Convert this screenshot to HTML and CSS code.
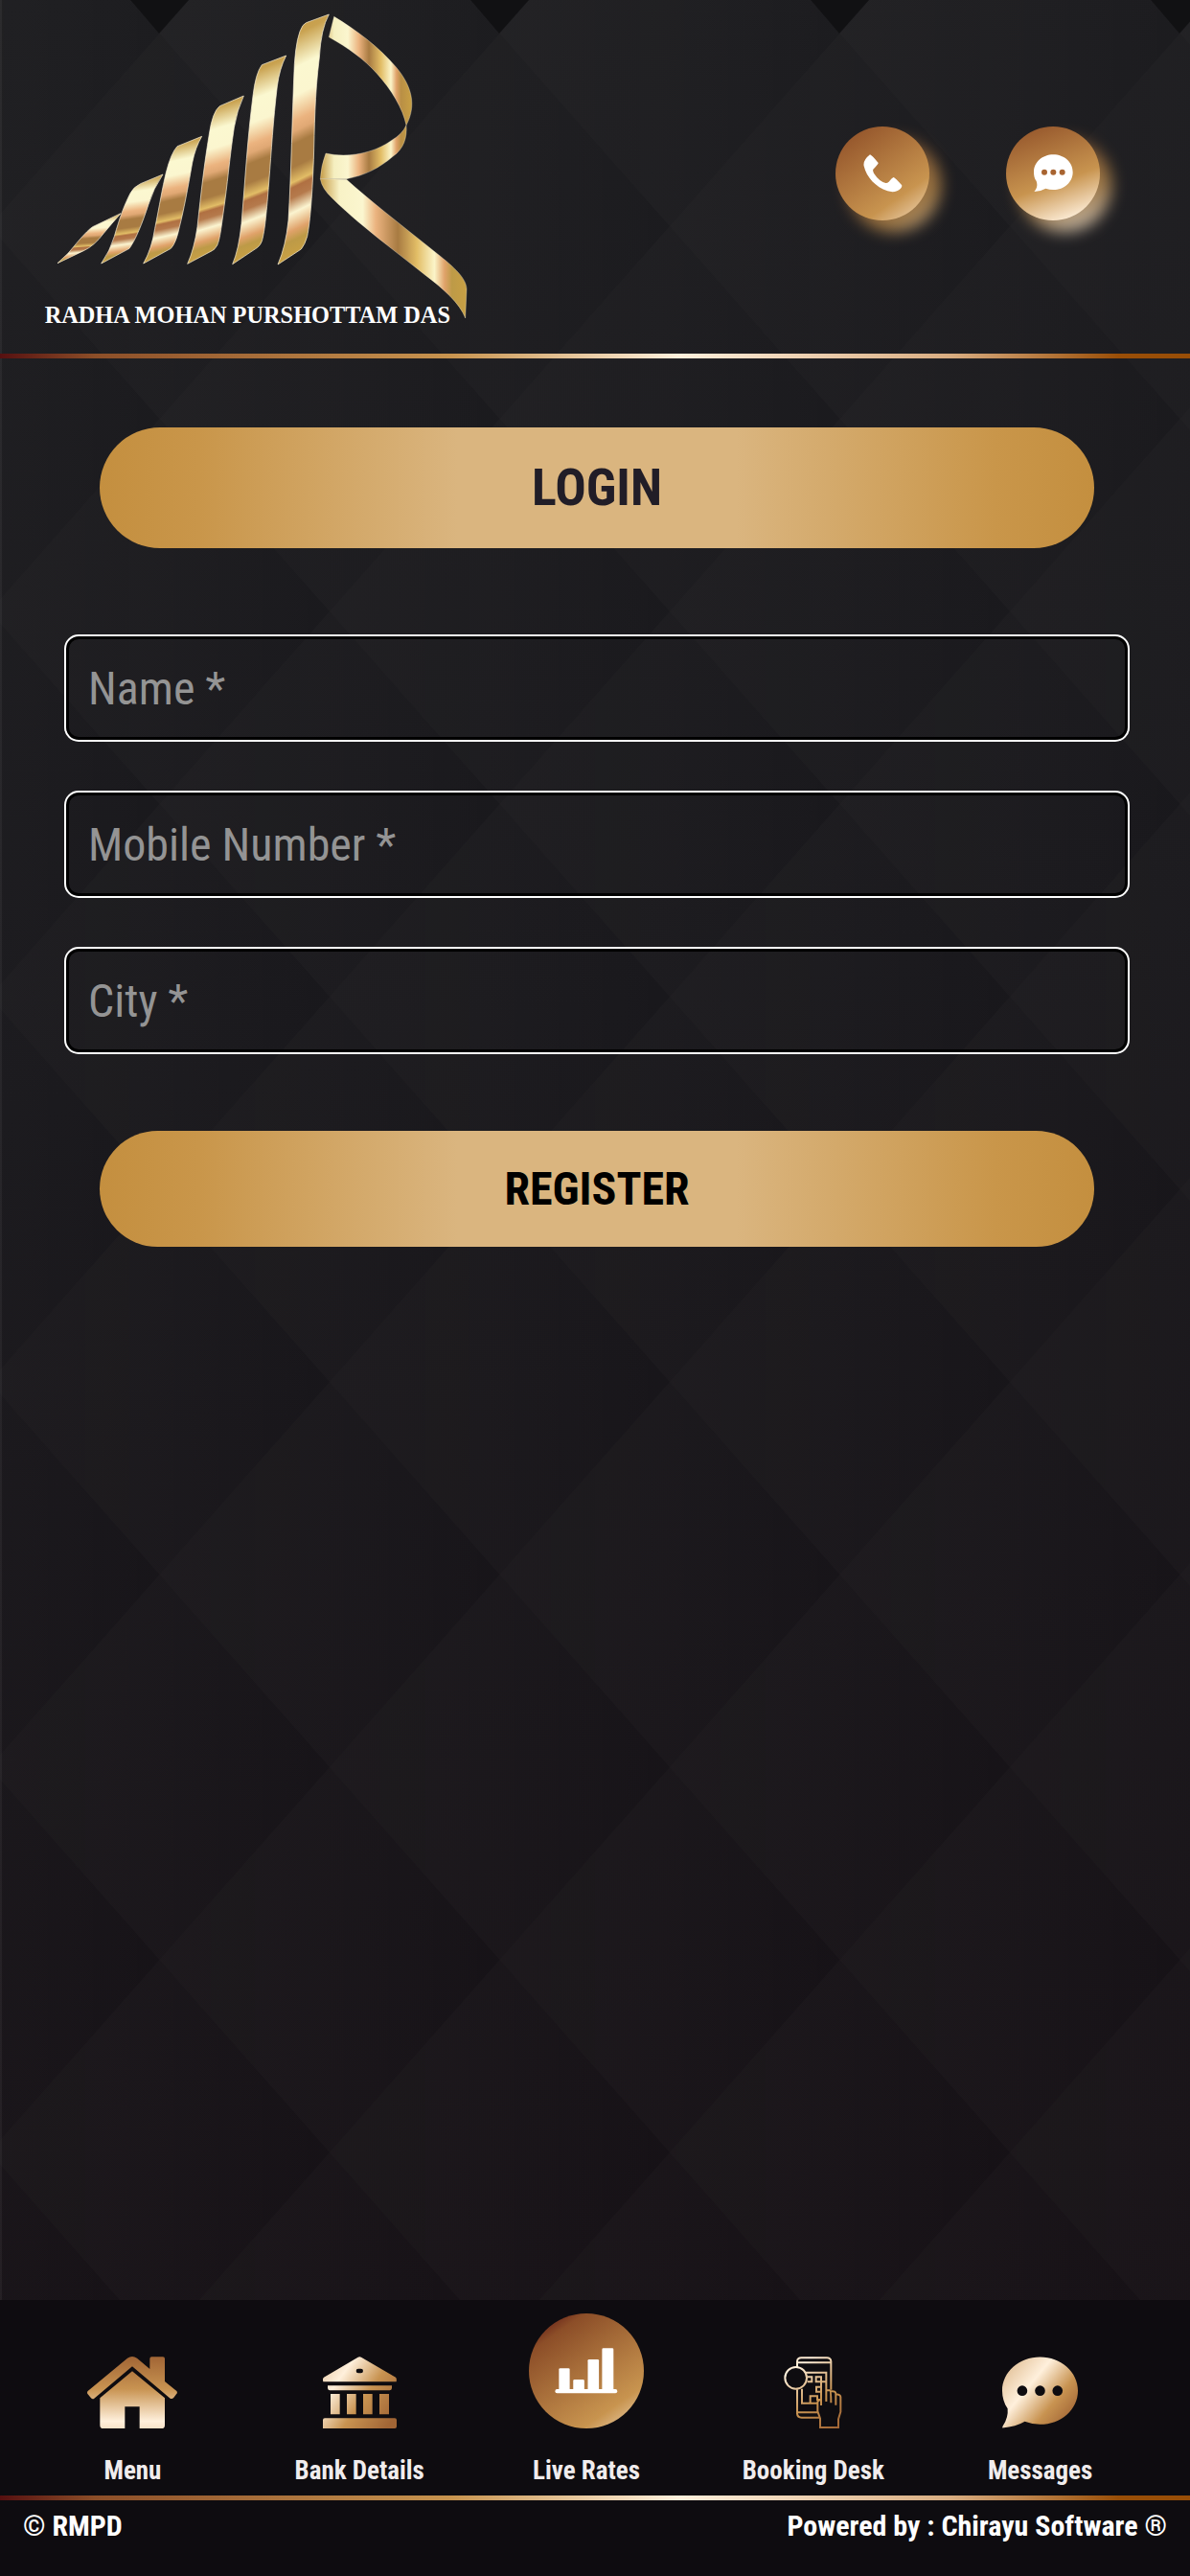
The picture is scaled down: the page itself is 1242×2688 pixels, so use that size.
FILE: index.html
```
<!DOCTYPE html>
<html lang="en">
<head>
    <meta charset="UTF-8">
    <meta name="viewport" content="width=device-width, initial-scale=1.0">
    <title>Radha Mohan Purshottam Das</title>
    <link rel="stylesheet" href="styles.css">
</head>
<body>
    <header class="header">
        <svg class="logo" viewBox="0 0 1560 1083" role="img" aria-label="Radha Mohan Purshottam Das">
            <defs>
                <linearGradient id="bar" x1="0.45" y1="0" x2="0.55" y2="1">
                    <stop offset="0" stop-color="#c49a45"/>
                    <stop offset="0.07" stop-color="#c9a250"/>
                    <stop offset="0.2" stop-color="#fbf8d0"/>
                    <stop offset="0.31" stop-color="#fbf6cf"/>
                    <stop offset="0.41" stop-color="#ebb37f"/>
                    <stop offset="0.45" stop-color="#e0a874"/>
                    <stop offset="0.5" stop-color="#a87b42"/>
                    <stop offset="0.59" stop-color="#a87b42"/>
                    <stop offset="0.65" stop-color="#e2bd66"/>
                    <stop offset="0.67" stop-color="#b07042"/>
                    <stop offset="0.71" stop-color="#b57a4c"/>
                    <stop offset="0.77" stop-color="#fbf4d0"/>
                    <stop offset="0.84" stop-color="#e0a26a"/>
                    <stop offset="0.88" stop-color="#bd9a47"/>
                    <stop offset="0.94" stop-color="#c8a044"/>
                    <stop offset="1" stop-color="#98683a"/>
                </linearGradient>
                <linearGradient id="loop" gradientUnits="userSpaceOnUse" x1="1003" y1="0" x2="1290" y2="0">
                    <stop offset="0" stop-color="#c49a45"/>
                    <stop offset="0.15" stop-color="#f5efc0"/>
                    <stop offset="0.3" stop-color="#fbf6cf"/>
                    <stop offset="0.42" stop-color="#ebb37f"/>
                    <stop offset="0.53" stop-color="#a87b42"/>
                    <stop offset="0.66" stop-color="#e2bd66"/>
                    <stop offset="0.77" stop-color="#fbf4c8"/>
                    <stop offset="0.83" stop-color="#e0a26a"/>
                    <stop offset="0.88" stop-color="#b98f45"/>
                    <stop offset="1" stop-color="#c8a044"/>
                </linearGradient>
                <linearGradient id="leg" gradientUnits="userSpaceOnUse" x1="1003" y1="0" x2="1461" y2="0">
                    <stop offset="0" stop-color="#c49a45"/>
                    <stop offset="0.13" stop-color="#f8f2c6"/>
                    <stop offset="0.29" stop-color="#fbf6cf"/>
                    <stop offset="0.38" stop-color="#ebb37f"/>
                    <stop offset="0.53" stop-color="#a87b42"/>
                    <stop offset="0.66" stop-color="#e2bd66"/>
                    <stop offset="0.78" stop-color="#fbf4c8"/>
                    <stop offset="0.85" stop-color="#e0a26a"/>
                    <stop offset="0.9" stop-color="#bd9a47"/>
                    <stop offset="1" stop-color="#c8a044"/>
                </linearGradient>
            </defs>
            <g fill="url(#bar)" stroke="#fff6dc" stroke-width="2">
                <path d="M378 668Q350 700 325 730Q295 770 262 785L180 824Q215 795 245 755Q275 720 290 710Z"/>
                <path d="M510 546Q480 590 465 640C445 700 425 750 405 778L317 825Q345 785 358 740C375 680 390 640 408 605Q418 585 440 575Z"/>
                <path d="M632 427Q612 460 602 510C588 590 575 660 562 710Q552 760 535 778L449 825Q475 780 485 715C500 640 508 590 520 540Q535 480 555 458Z"/>
                <path d="M763 300Q742 345 733 400C718 500 712 580 700 660C692 720 688 750 680 768Q672 782 664 785L587 826Q608 780 618 710C630 600 640 510 655 420Q665 350 688 332Z"/>
                <path d="M896 174Q875 215 868 270C855 380 850 470 842 570C835 660 830 720 820 755Q815 768 806 775L728 827Q748 780 756 700C768 560 775 430 792 300Q800 230 820 203Z"/>
                <path d="M1030 45Q1005 90 1000 180C985 300 985 400 982 500C978 600 972 690 962 740Q955 765 943 780L870 828Q895 770 903 690C912 550 915 350 922 200Q928 110 948 80Q955 70 975 65Z"/>
            </g>
            <g stroke="#fff6dc" stroke-width="1">
                <path fill="url(#loop)" d="M1046 52C1110 90 1190 150 1240 210C1290 270 1305 330 1272 392C1262 340 1225 280 1180 230C1140 185 1090 150 1030 116Z"/>
                <path fill="url(#loop)" d="M1272 392C1275 430 1265 465 1230 490C1190 525 1140 550 1085 560L1003 560Q1005 520 1020 480C1090 495 1170 480 1225 440Q1260 420 1272 392Z"/>
                <path fill="url(#leg)" d="M1003 560L1085 562C1160 630 1270 715 1370 795C1420 835 1460 870 1461 905L1457 996C1440 950 1390 905 1330 860C1230 780 1120 700 1040 620Q1008 590 1003 560Z"/>
            </g>
            <text class="logo-text" x="140" y="1011">RADHA MOHAN PURSHOTTAM DAS</text>
        </svg>
        <div class="contact">
            <a class="round call" href="#call" aria-label="Call">
                <svg width="41" height="40" viewBox="241 182 123 120">
                    <path fill="#fff" d="M262 183Q267 184 288 209Q288 213 272 229Q270 234 274 241Q290 266 311 272Q316 273 321 268Q332 255 336 254Q341 256 361 278Q364 282 358 289C348 299 334 302 317 297C280 285 251 254 243 219Q239 201 262 183Z"/>
                </svg>
            </a>
            <a class="round chat" href="#chat" aria-label="Chat">
                <svg width="41" height="40" viewBox="778 180 123 120">
                    <path fill="#fff" d="M779 297C789 286 790 276 786 264C780 256 778 246 778 236C778 205 805 181 839 181S900 205 900 236S873 291 839 291Q827 291 815 287Q798 297 779 297Z"/>
                    <g fill="#a86431"><circle cx="811" cy="236" r="9"/><circle cx="839" cy="236" r="9"/><circle cx="867" cy="236" r="9"/></g>
                </svg>
            </a>
        </div>
    </header>
    <div class="divider"></div>

    <main class="content">
        <h1 class="title">LOGIN</h1>
        <form class="login-form">
            <input type="text" name="name" placeholder="Name *" aria-label="Name">
            <input type="tel" name="mobile" placeholder="Mobile Number *" aria-label="Mobile Number">
            <input type="text" name="city" placeholder="City *" aria-label="City">
            <button type="submit" class="register">REGISTER</button>
        </form>
    </main>

    <div class="bottom">
        <nav class="nav">
            <a href="#menu">
                <svg width="94" height="75" viewBox="273 239 282 225">
                    <defs>
                        <linearGradient id="home" x1="0" y1="0" x2="0" y2="1">
                            <stop offset="0" stop-color="#a16535"/>
                            <stop offset="0.45" stop-color="#c89351"/>
                            <stop offset="0.9" stop-color="#fff0dc"/>
                            <stop offset="1" stop-color="#f8e2c8"/>
                        </linearGradient>
                    </defs>
                    <path fill="url(#home)" d="M275 347L399 244Q414 234 429 244L469 278V246Q469 240 475 240H510Q516 240 516 246V317L553 347Q557 352 552 357L543 369Q538 373 533 370L414 270L295 370Q290 374 285 369L275 357Q271 352 275 347ZM414 285L516 369V454Q516 464 506 464H437V396H391V464H323Q313 464 313 454V369Z"/>
                </svg>
                <span>Menu</span>
            </a>
            <a href="#bank">
                <svg width="77" height="75" viewBox="1008 239 231 225">
                    <defs>
                        <linearGradient id="bank" x1="0" y1="0.1" x2="1" y2="0.8">
                            <stop offset="0" stop-color="#e8cba7"/>
                            <stop offset="0.25" stop-color="#fff0dc"/>
                            <stop offset="0.6" stop-color="#c89351"/>
                            <stop offset="1" stop-color="#a16535"/>
                        </linearGradient>
                    </defs>
                    <path fill="url(#bank)" fill-rule="evenodd" d="M1118 241Q1123 238 1128 241L1236 304Q1240 308 1238 318H1009Q1006 308 1011 304ZM1119 277Q1112 277 1112 284T1119 291H1127Q1134 291 1134 284T1127 277ZM1023 330H1224V338Q1223 345 1217 345H1030Q1024 345 1023 338ZM1032 356H1061V420H1032ZM1083 356H1112V420H1083ZM1134 356H1163V420H1134ZM1185 356H1215V420H1185ZM1014 432H1233Q1239 432 1239 438V458Q1239 464 1233 464H1008V438Q1008 432 1014 432Z"/>
                </svg>
                <span>Bank Details</span>
            </a>
            <a href="#rates">
                <span class="rates">
                    <svg width="66" height="48" viewBox="353 209 197 145">
                        <g fill="#fff">
                            <rect x="353" y="339" width="196" height="13" rx="6"/>
                            <rect x="365" y="273" width="34" height="75" rx="4"/>
                            <rect x="410" y="309" width="35" height="40" rx="4"/>
                            <rect x="456" y="245" width="35" height="104" rx="4"/>
                            <rect x="501" y="210" width="36" height="139" rx="4"/>
                        </g>
                    </svg>
                </span>
                <span>Live Rates</span>
            </a>
            <a href="#booking">
                <svg width="61" height="75" viewBox="1074 239 183 225">
                    <defs>
                        <linearGradient id="desk" gradientUnits="userSpaceOnUse" x1="1090" y1="240" x2="1240" y2="464">
                            <stop offset="0" stop-color="#f3dcbf"/>
                            <stop offset="0.15" stop-color="#fff0dc"/>
                            <stop offset="0.6" stop-color="#c89351"/>
                            <stop offset="1" stop-color="#a16535"/>
                        </linearGradient>
                    </defs>
                    <g fill="none" stroke="url(#desk)" stroke-width="6">
                        <path d="M1116 272V254Q1117 243 1129 243H1209Q1221 243 1222 254V343M1117 258H1222M1116 342V418Q1117 430 1130 430H1185M1117 414H1180"/>
                        <circle cx="1112" cy="306" r="34"/>
                        <path d="M1143 289H1207V380M1131 340V385H1178M1149 303H1162V318H1148M1175 303H1191V318H1175ZM1191 318H1206M1191 334H1176V349H1191M1157 382V363H1179V374H1190M1191 318V392M1207 345H1218Q1222 346 1222 384M1222 348Q1237 346 1237 356V391M1238 357Q1252 358 1252 366V412L1245 435V461H1188V433L1180 410V382Q1181 374 1191 374"/>
                    </g>
                </svg>
                <span>Booking Desk</span>
            </a>
            <a href="#messages">
                <svg width="79" height="75" viewBox="732 239 238 225">
                    <defs>
                        <linearGradient id="msg" x1="0.05" y1="0.15" x2="0.95" y2="0.85">
                            <stop offset="0" stop-color="#e3c29a"/>
                            <stop offset="0.35" stop-color="#fff0dc"/>
                            <stop offset="0.7" stop-color="#c89351"/>
                            <stop offset="1" stop-color="#a16535"/>
                        </linearGradient>
                    </defs>
                    <path fill="url(#msg)" d="M733 463Q732 460 734 457Q752 430 749 402C738 386 732 366 732 346C732 287 785 240 851 240S970 287 970 346S917 452 851 452Q826 452 803 443Q775 460 733 463Z"/>
                    <g fill="#0e0c10"><circle cx="795" cy="346" r="16"/><circle cx="851" cy="346" r="16"/><circle cx="906" cy="346" r="16"/></g>
                </svg>
                <span>Messages</span>
            </a>
        </nav>
        <div class="divider"></div>
        <footer class="footer">
            <span>© RMPD</span>
            <span>Powered by : Chirayu Software ®</span>
        </footer>
    </div>
</body>
</html>
```
FILE: styles.css
```
* {
    box-sizing: border-box;
}
body {
    margin: 0;
    min-height: 100vh;
    display: flex;
    flex-direction: column;
    color: #fff;
    font-family: "Roboto Condensed", "Liberation Sans Narrow", Roboto, sans-serif;
    /* dark triangles on the top edge, diamond tiles, then the base colour */
    background:
        url("data:image/svg+xml,%3Csvg xmlns='http://www.w3.org/2000/svg' width='355' height='35'%3E%3Cpath fill='%23111113' d='M147 0H208L177 35Z'/%3E%3C/svg%3E") -11px 0 repeat-x,
        url("data:image/svg+xml,%3Csvg xmlns='http://www.w3.org/2000/svg' width='355' height='402'%3E%3Cdefs%3E%3ClinearGradient id='g'%3E%3Cstop stop-color='%23ffeedd' stop-opacity='.03'/%3E%3Cstop offset='1' stop-color='%23ffeedd' stop-opacity='0'/%3E%3C/linearGradient%3E%3Cpath id='d' fill='url(%23g)' d='M0 201L177.500 0L355 201L177.500 402Z'/%3E%3C/defs%3E%3Cuse href='%23d'/%3E%3Cuse href='%23d' x='-177.500' y='-201'/%3E%3Cuse href='%23d' x='177.500' y='-201'/%3E%3Cuse href='%23d' x='-177.500' y='201'/%3E%3Cuse href='%23d' x='177.500' y='201'/%3E%3C/svg%3E") -11px 35px repeat,
        linear-gradient(170deg, #1d1d20 0%, #19181c 40%, #150f14 100%);
    box-shadow: inset 2px 0 rgba(255,255,255,0.05);
}
.header {
    display: flex;
    justify-content: space-between;
    align-items: center;
    padding: 0 94px 8px 0;
}
.logo {
    width: 520px;
    height: 361px;
}
.logo-text {
    font-family: "Liberation Serif", serif;
    font-size: 73px;
    font-weight: bold;
    fill: #fff;
}
.contact {
    display: flex;
    gap: 80px;
}
.round {
    position: relative;
    display: flex;
    justify-content: center;
    align-items: center;
    width: 98px;
    height: 98px;
}
.round::before,
.round::after {
    content: "";
    position: absolute;
    inset: 0;
    z-index: -1;
    border-radius: 50%;
    background: linear-gradient(145deg, #94552b 10%, #c8944f 72%, #f3dcbf 100%);
}
/* glow in the colours of the button */
.round::before {
    top: 12px;
    left: 12px;
    width: 98px;
    height: 98px;
    filter: blur(8px);
    opacity: 0.75;
}
.chat::before,
.chat::after {
    background: linear-gradient(160deg, #94552b 5%, #c8944f 58%, #fff0dc 92%);
}
.divider {
    height: 5px;
    background: linear-gradient(90deg, #561010 0%, #8c4e28 8%, #c8944f 38%, #fff0dc 57%, #d8ac80 80%, #994e07 94%, #994e07 100%);
}
.content {
    padding: 72px 63px 80px 67px;
}
.title,
.register {
    display: block;
    margin: 0 37px;
    border: none;
    border-radius: 64px;
    font-family: inherit;
    font-weight: bold;
    text-align: center;
    background: linear-gradient(90deg, #c48f3f 0%, #c9964a 10%, #dab57f 36%, #dab57f 64%, #c9964a 90%, #c48f3f 100%);
}
.title {
    margin-bottom: 90px;
    font-size: 54px;
    line-height: 126px;
    color: #211d27;
}
.login-form {
    display: flex;
    flex-direction: column;
    gap: 51px;
}
.login-form input {
    width: 100%;
    height: 112px;
    padding: 0 23px;
    border: 2px solid #fff;
    border-radius: 15px;
    font-family: inherit;
    font-size: 48px;
    color: #fff;
    background: transparent;
    box-shadow: inset 0 0 0 3px #000;
}
.login-form input::placeholder {
    color: #949494;
    opacity: 1;
}
.register {
    height: 121px;
    margin-top: 29px;
    font-size: 48px;
    color: #000;
    cursor: pointer;
}
.bottom {
    margin-top: auto;
    background: #0e0c10;
}
.nav {
    display: grid;
    grid-template-columns: repeat(5, 1fr);
    padding: 14px 38px 10px 20px;
}
.nav a {
    display: flex;
    flex-direction: column;
    justify-content: flex-end;
    align-items: center;
    gap: 28px;
    font-size: 27px;
    line-height: 32px;
    font-weight: bold;
    color: #f0eced;
    text-decoration: none;
}
.rates {
    display: flex;
    justify-content: center;
    align-items: center;
    width: 120px;
    height: 120px;
    border-radius: 50%;
    background: linear-gradient(145deg, #5a1414 5%, #8c4e28 20%, #c8944f 78%, #f0d8b8 100%);
}
.footer {
    display: flex;
    justify-content: space-between;
    padding: 9px 24px 34px;
    font-size: 30px;
    line-height: 36px;
    font-weight: bold;
}
```
